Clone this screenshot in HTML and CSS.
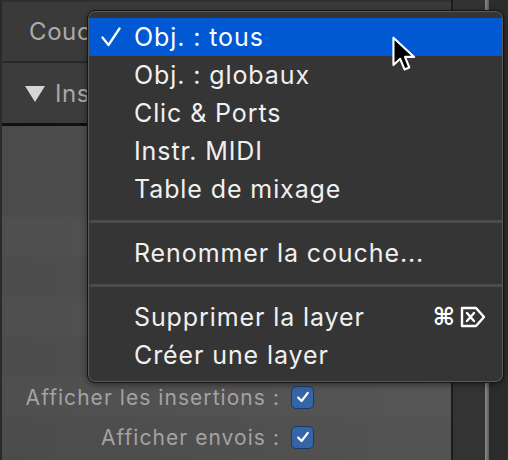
FILE: index.html
```html
<!DOCTYPE html>
<html lang="fr">
<head>
<meta charset="utf-8">
<link rel="stylesheet" href="styles.css">
</head>
<body>
<div class="app">
  <div class="panel">
    <div class="hdr"><span class="clip">Couche :</span></div>
    <div class="sub"><span class="tri"></span><span class="clip short">Inspecteur</span></div>
    <div class="body">
      <div class="row top"></div>
      <div class="row alt"></div>
      <div class="row"></div>
      <div class="row alt"></div>
      <div class="row"></div>
      <div class="row alt lbl"><span class="lbl-text">Afficher les insertions :</span><span class="cb"><svg viewBox="0 0 16 16" width="16" height="16"><path d="M3.2 8.6 L6.6 12 L12.8 3.8" fill="none" stroke="#fff" stroke-width="2.2" stroke-linecap="round" stroke-linejoin="round"/></svg></span></div>
      <div class="row lbl"><span class="lbl-text">Afficher envois :</span><span class="cb"><svg viewBox="0 0 16 16" width="16" height="16"><path d="M3.2 8.6 L6.6 12 L12.8 3.8" fill="none" stroke="#fff" stroke-width="2.2" stroke-linecap="round" stroke-linejoin="round"/></svg></span></div>
    </div>
  </div>
  <div class="side">
    <div class="gap"></div>
    <div class="bar"></div>
    <div class="edge"></div>
  </div>
</div>

<div class="menu">
  <div class="item sel"><span class="chk"><svg viewBox="0 0 20 20" width="20" height="20"><path d="M1.5 10.5 L7.5 18 L18.5 1.5" fill="none" stroke="#fff" stroke-width="2.3" stroke-linecap="round" stroke-linejoin="round"/></svg></span><span class="txt">Obj. : tous</span></div>
  <div class="item"><span class="chk"></span><span class="txt">Obj. : globaux</span></div>
  <div class="item"><span class="chk"></span><span class="txt">Clic &amp; Ports</span></div>
  <div class="item"><span class="chk"></span><span class="txt">Instr. MIDI</span></div>
  <div class="item"><span class="chk"></span><span class="txt">Table de mixage</span></div>
  <div class="sep"></div>
  <div class="item"><span class="chk"></span><span class="txt">Renommer la couche...</span></div>
  <div class="sep"></div>
  <div class="item"><span class="chk"></span><span class="txt">Supprimer la layer</span><span class="key"><span class="cmd">⌘</span><svg class="del" viewBox="0 0 26 22" width="26" height="22"><path d="M2 2 H16 L24 11 L16 20 H2 Z" fill="none" stroke="#fff" stroke-width="2.4" stroke-linejoin="round"/><path d="M7 7 L14 15 M14 7 L7 15" stroke="#fff" stroke-width="2.4" stroke-linecap="round"/></svg></span></div>
  <div class="item"><span class="chk"></span><span class="txt">Créer une layer</span></div>
</div>

<svg class="cursor" viewBox="0 0 26 38" width="25" height="37">
  <path d="M1.5 1.5 L1.5 30 L8.5 23.5 L13 34.5 L18 32.5 L13.5 21.5 L23 21.5 Z" fill="#000" stroke="#fff" stroke-width="2.2" stroke-linejoin="round"/>
</svg>
</body>
</html>
```

FILE: styles.css
```css
* { box-sizing: border-box; }
html, body { margin: 0; padding: 0; }
body {
  width: 508px;
  height: 460px;
  overflow: hidden;
  background: #2b2b2b;
  font-family: Inter, "Noto Sans", "Liberation Sans", sans-serif;
  position: relative;
}
.app {
  display: flex;
  height: 460px;
}
.panel {
  width: 453px;
  border-left: 2px solid #2a2a2a;
  border-right: 2px solid #1c1c1c;
  display: flex;
  flex-direction: column;
  background: #4e4e4e;
}
.clip {
  width: 58px;
  overflow: hidden;
  white-space: nowrap;
}
.clip.short { width: 32px; }
.hdr {
  height: 63px;
  background: #3a3a3a;
  border-top: 2px solid #303030;
  border-bottom: 2px solid #282828;
  color: #ababab;
  font-size: 24px;
  letter-spacing: 0.6px;
  padding-left: 27px;
  display: flex;
  align-items: center;
}
.sub {
  height: 63px;
  background: #3c3c3c;
  border-bottom: 3px solid #101010;
  color: #a8a8a8;
  font-size: 24px;
  letter-spacing: 0.6px;
  padding-left: 23px;
  display: flex;
  align-items: center;
  gap: 10px;
}
.tri {
  width: 0;
  height: 0;
  border-left: 10px solid transparent;
  border-right: 10px solid transparent;
  border-top: 16px solid #d6d6d6;
  margin-top: 1px;
}
.body {
  flex: 1;
  display: flex;
  flex-direction: column;
  background: linear-gradient(90deg, #4a4a4a, #535353);
}
.row {
  height: 40px;
  flex: none;
  background: linear-gradient(90deg, #4c4c4c, #535353);
}
.row.alt { background: linear-gradient(90deg, #4f4f4f, #565656); }
.row.top { height: 91px; background: linear-gradient(90deg, #4b4b4b, #545454); }
.lbl {
  display: flex;
  align-items: center;
}
.lbl-text {
  width: 278px;
  text-align: right;
  color: #a3a3a3;
  font-size: 21px;
  letter-spacing: 1.05px;
}
.cb {
  margin-left: 11px;
  width: 23px;
  height: 23px;
  border-radius: 5px;
  background: #3465a6;
  border: 1px solid #1e3a62;
  display: flex;
  align-items: center;
  justify-content: center;
}
.side {
  flex: 1;
  display: flex;
}
.gap { width: 32px; background: #333333; }
.bar { width: 4px; background: linear-gradient(90deg, #8c8c8c, #5a5a5a); }
.edge { flex: 1; background: #2c2c2c; }

.menu {
  position: absolute;
  left: 87px;
  top: 10px;
  width: 417px;
  height: 373px;
  background: #353535;
  border: 1px solid #151515;
  box-shadow: inset 0 0 0 1px #5a5a5a, 0 2px 6px rgba(0,0,0,0.4);
  border-radius: 8px;
  padding: 7px 1px 9px;
  overflow: hidden;
}
.item {
  height: 38px;
  display: flex;
  align-items: center;
  color: #f0f0f0;
  font-size: 25px;
  letter-spacing: 0.9px;
  padding-left: 12px;
  padding-right: 16px;
}
.item.sel { background: #0058d2; color: #fff; }
.chk {
  width: 33px;
  display: flex;
  align-items: center;
}
.txt { flex: 1; white-space: nowrap; }
.key {
  display: flex;
  align-items: center;
  gap: 4px;
}
.cmd {
  font-family: "DejaVu Sans", sans-serif;
  font-size: 24px;
  font-weight: bold;
  color: #fff;
}
.sep {
  height: 3px;
  background: #4b4b4b;
  margin: 12px 0 11px;
}
.cursor {
  position: absolute;
  left: 392px;
  top: 36px;
}
```
